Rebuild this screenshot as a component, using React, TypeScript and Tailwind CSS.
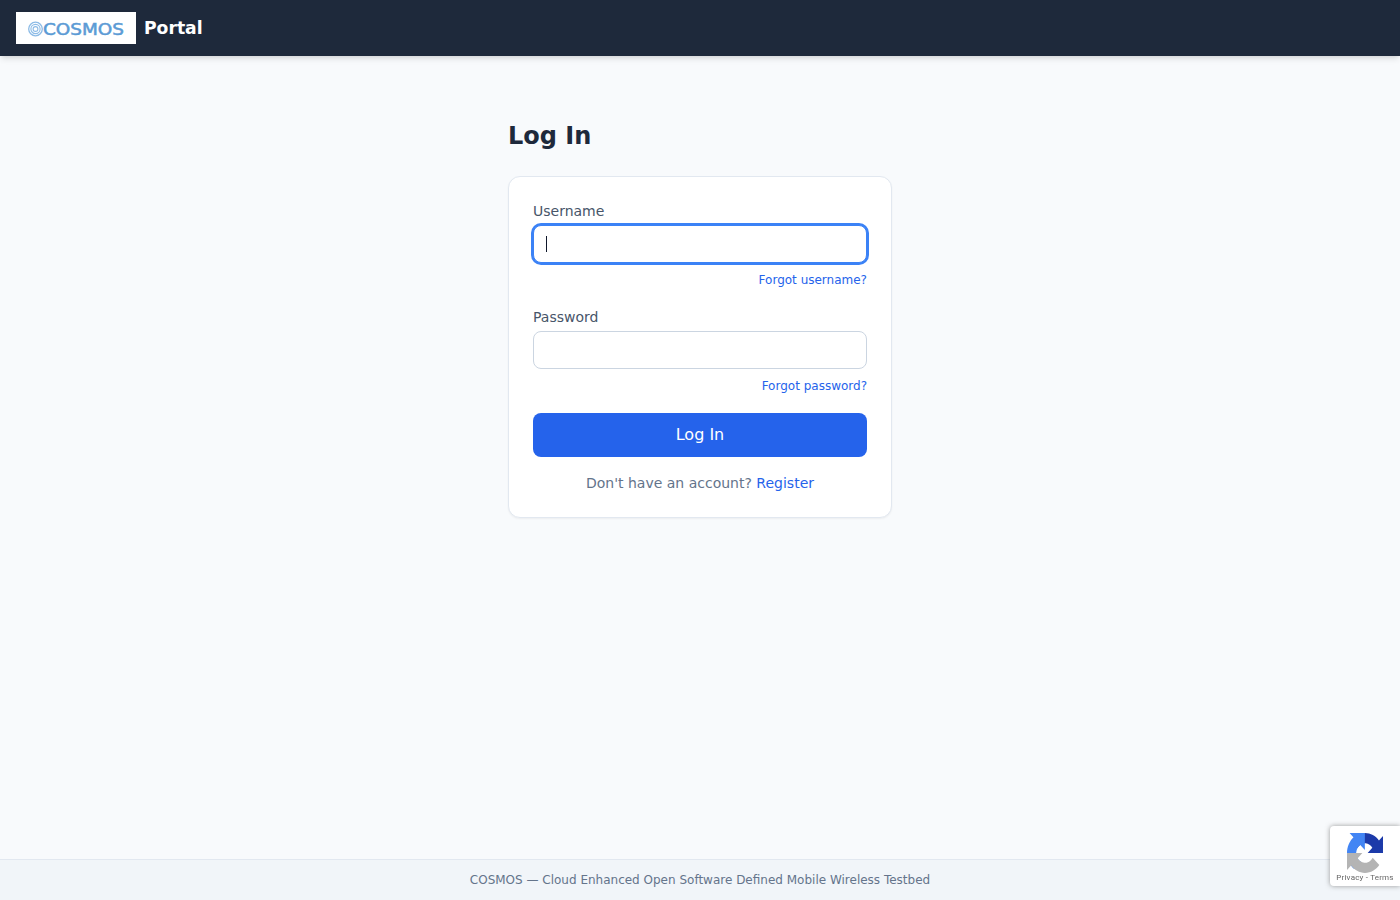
const RecaptchaIcon = () => (
  <svg viewBox="0 0 64 64" preserveAspectRatio="none" className="h-10 w-9">
    <path d="M64 31.955l-.033-1.37V4.687l-7.16 7.16C50.948 4.674 42.033.093 32.05.093c-10.4 0-19.622 4.96-25.458 12.64l11.736 11.86a15.55 15.55 0 0 1 4.754-5.334c2.05-1.6 4.952-2.906 8.968-2.906.485 0 .86.057 1.135.163 4.976.393 9.288 3.14 11.828 7.124l-8.307 8.307c10.522-.04 22.4-.066 27.295.004" fill="#1c3aa9" />
    <path d="M31.862.094l-1.37.033H4.594l7.16 7.16C4.58 13.147 0 22.06 0 32.046c0 10.4 4.96 19.622 12.64 25.458L24.5 45.768a15.55 15.55 0 0 1-5.334-4.754c-1.6-2.05-2.906-4.952-2.906-8.968 0-.485.057-.86.163-1.135.393-4.976 3.14-9.288 7.124-11.828l8.307 8.307c-.04-10.522-.066-22.4.004-27.295" fill="#4285f4" />
    <path d="M.002 32.047l.033 1.37v25.898l7.16-7.16c5.86 7.173 14.774 11.754 24.76 11.754 10.4 0 19.622-4.96 25.458-12.64l-11.736-11.86a15.55 15.55 0 0 1-4.754 5.334c-2.05 1.6-4.952 2.906-8.968 2.906-.485 0-.86-.057-1.135-.163-4.976-.393-9.288-3.14-11.828-7.124l8.307-8.307c-10.522.04-22.4.066-27.295-.004" fill="#b4b4b4" />
  </svg>
);

const CosmosLogo = () => (
  <div className="flex h-8 w-[120px] items-center justify-center bg-white">
    <svg viewBox="0 0 96 20" className="h-5 w-24">
      <g fill="none" stroke="#8cbbe6">
        <circle cx="7.5" cy="11" r="6.8" strokeWidth="1.3" />
        <circle cx="7.5" cy="11" r="4.6" strokeWidth="1.1" />
        <circle cx="7.5" cy="11" r="2.4" strokeWidth="1.1" />
      </g>
      <text
        x="15"
        y="16.6"
        textLength="81"
        lengthAdjust="spacingAndGlyphs"
        fill="#5b9bd5"
        fontSize="15"
        stroke="#5b9bd5"
        strokeWidth="0.5"
        fontFamily="DejaVu Sans"
      >
        COSMOS
      </text>
    </svg>
  </div>
);

const fieldClass =
  "h-[38px] w-full rounded-lg border border-[#cbd5e1] bg-white px-3 text-sm text-slate-900 outline-none focus:border-[#3b82f6] focus:ring-2 focus:ring-[#3b82f6]";

export default function App() {
  return (
    <div className="flex min-h-screen flex-col bg-[#f8fafc] font-['DejaVu_Sans',sans-serif]">
      <header className="relative flex h-14 items-center gap-2 bg-[#1e293b] px-4 shadow-md">
        <CosmosLogo />
        <span className="mt-0.5 text-[17.2px] font-bold text-white">Portal</span>
      </header>

      <main className="flex-1 pt-16">
        <div className="mx-auto w-96">
          <h1 className="mb-6 text-2xl font-bold text-[#1e293b]">Log In</h1>
          <form className="rounded-xl border border-[#e2e8f0] bg-white p-6 shadow-[0_1px_2px_rgba(0,0,0,0.05)]">
            <div className="mb-[19px]">
              <label className="mb-1 block text-sm text-[#475569]">Username</label>
              <div className="relative">
                <input autoFocus type="text" className={fieldClass} />
                <span className="absolute top-[11px] left-[13px] h-4 w-px bg-slate-900" />
              </div>
              <div className="mt-[9px] text-right text-xs">
                <a href="#" className="text-[#2563eb]">Forgot username?</a>
              </div>
            </div>
            <div className="mb-[19px]">
              <label className="mb-1 block text-sm text-[#475569]">Password</label>
              <input type="password" className={fieldClass} />
              <div className="mt-[9px] text-right text-xs">
                <a href="#" className="text-[#2563eb]">Forgot password?</a>
              </div>
            </div>
            <button type="button" className="h-11 w-full rounded-lg bg-[#2563eb] text-base text-white">
              Log In
            </button>
            <p className="mt-4 text-center text-sm text-[#64748b]">
              Don't have an account? <a href="#" className="text-[#2563eb]">Register</a>
            </p>
          </form>
        </div>
      </main>

      <footer className="h-[41px] border-t border-[#e2e8f0] bg-[#f1f5f9] pt-3 text-center text-xs text-[#64748b]">
        COSMOS — Cloud Enhanced Open Software Defined Mobile Wireless Testbed
      </footer>

      <div className="fixed right-0 bottom-3.5 flex h-[60px] w-[70px] flex-col items-center rounded-l-sm bg-white pt-[7px] shadow-[0_0_5px_rgba(128,128,128,0.8)]">
        <RecaptchaIcon />
        <span className="font-['Roboto',sans-serif] text-[8px] leading-[10px] tracking-[0.2px] whitespace-nowrap text-[#666]">
          Privacy - Terms
        </span>
      </div>
    </div>
  );
}
